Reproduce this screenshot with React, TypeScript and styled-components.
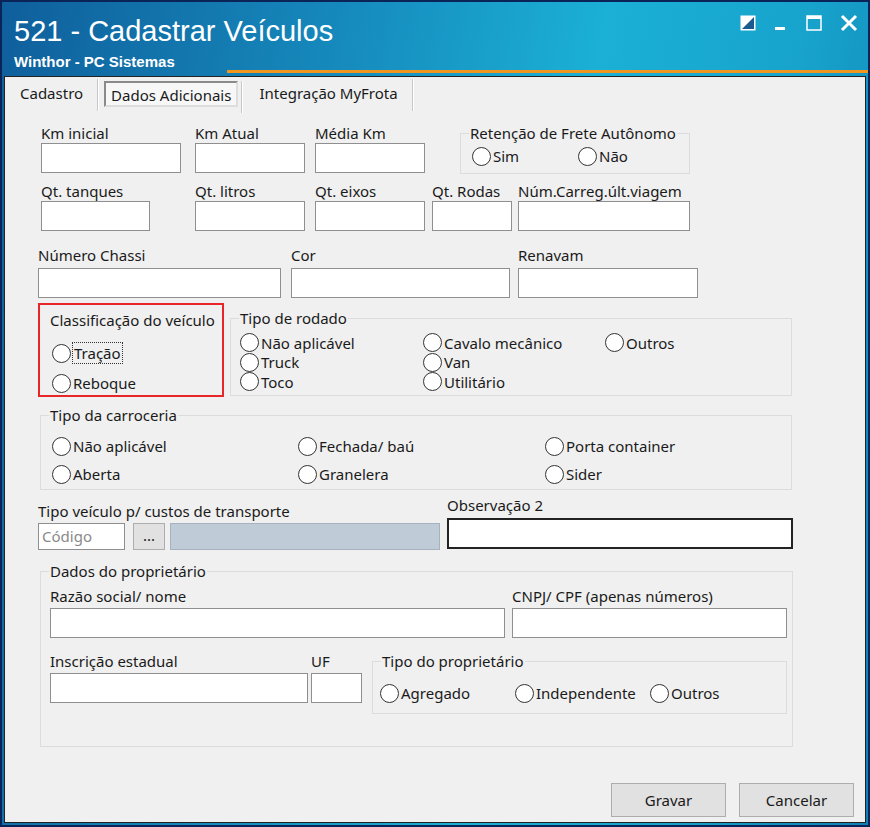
import React from "react";
import styled, { createGlobalStyle } from "styled-components";

const Global = createGlobalStyle`
  html, body { margin: 0; padding: 0; background: #0b2a66; }
  * { box-sizing: border-box; }
`;

const Win = styled.div`
  width: 870px; height: 827px; display: flex; flex-direction: column;
  background: linear-gradient(100deg, #0f5f9c 0%, #168bbd 35%, #1bb0d6 60%, #17a3cc 80%, #1080b5 100%);
  border: 2px solid #0a2458;
  font-family: "Noto Sans", "DejaVu Sans", sans-serif; font-size: 15px; color: #1a1a1a;
`;
const TitleBar = styled.div`
  height: 74px; position: relative; padding: 11px 0 0 12px; color: #fff;
  &::after { content: ""; position: absolute; left: 225px; right: 0; bottom: 3px; height: 3px; background: #f0961e; }
`;
const Title = styled.div`font-family: "Liberation Sans", Arial, sans-serif; font-size: 29px; line-height: 36px;`;
const Sub = styled.div`font-family: "Liberation Sans", Arial, sans-serif; font-weight: bold; font-size: 15px; margin-top: 4px;`;
const Controls = styled.div`
  position: absolute; right: 10px; top: 12px; display: flex; gap: 18px; align-items: center;
`;
const Body = styled.div`
  flex: 1; margin: 0 2px 2px; background: #f0f0f0; border: 1px solid #222; display: flex; flex-direction: column;
`;
const Tabs = styled.div`display: flex; align-items: center; height: 33px; padding-left: 6px;`;
const Tab = styled.div<{ $sel?: boolean }>`
  padding: 0 9px; height: 26px; line-height: 24px; margin-right: 12px; position: relative;
  ${p => p.$sel ? "border: 2px solid #8a8a8a; border-right-color:#ddd; border-bottom-color:#ddd; background:#f7f7f7; padding: 0 5px;" : ""}
  &::after { content: ""; position: absolute; right: -7px; top: -2px; height: 32px; border-left: 1px solid #c8c8c8; border-right: 1px solid #fff; }
`;
const Sheet = styled.div`flex: 1; display: flex; flex-direction: column; padding-left: 0;`;
const Row = styled.div<{ $mt: number }>`display: flex; align-items: flex-start; margin-top: ${p => p.$mt}px;`;
const Field = styled.div<{ $ml: number; $w: number; $up?: number }>`
  display: flex; flex-direction: column; margin-left: ${p => p.$ml}px; width: ${p => p.$w}px;
  margin-top: ${p => -(p.$up ?? 0)}px;
`;
const Label = styled.div<{ $h?: number }>`height: ${p => p.$h ?? 19}px; line-height: 18px; white-space: nowrap;`;
const Input = styled.div<{ $h?: number; $dark?: boolean }>`
  height: ${p => p.$h ?? 30}px; background: #fff;
  border: ${p => p.$dark ? "2px solid #222" : "1px solid #8f8f8f"};
`;
const Group = styled.fieldset<{ $ml: number; $w: number; $h: number; $mt?: number }>`
  margin: ${p => p.$mt ?? 0}px 0 0 ${p => p.$ml}px; width: ${p => p.$w}px; height: ${p => p.$h}px;
  border: 1px solid #dcdcdc; padding: 0; position: relative; min-width: 0;
  & > legend { padding: 0 1px; margin-left: 8px; line-height: 18px; }
`;
const RedBox = styled.div<{ $ml: number }>`
  margin-left: ${p => p.$ml}px; width: 186px; height: 94px; border: 2px solid #e8262a; padding: 6px 0 0 10px;
`;
const Grid = styled.div<{ $cols: string; $pt: number; $pl: number; $rh: number }>`
  display: grid; grid-template-columns: ${p => p.$cols}; grid-auto-rows: ${p => p.$rh}px;
  padding: ${p => p.$pt}px 0 0 ${p => p.$pl}px; align-items: center;
`;
const RadioWrap = styled.div`display: flex; align-items: center; gap: 2px; white-space: nowrap;`;
const Circle = styled.span`
  width: 19px; height: 19px; border-radius: 50%; border: 1.5px solid #333; background: #fff; flex: none;
`;
const Focus = styled.span`outline: 1px dotted #333; padding: 0 1px;`;
const SmallBtn = styled.div`
  width: 32px; height: 27px; margin-left: 8px; background: #e1e1e1; border: 1px solid #adadad; text-align: center; line-height: 22px;
`;
const GrayBox = styled.div`flex: 1; height: 27px; margin-left: 5px; background: #bfcbd6; border: 1px solid #a6b3bf;`;
const Placeholder = styled.div`
  width: 87px; height: 27px; background: #fff; border: 1px solid #8f8f8f; color: #8a8a8a; padding-left: 3px; line-height: 25px;
`;
const Buttons = styled.div`display: flex; justify-content: flex-end; gap: 13px; margin-top: auto; margin-bottom: 5px; padding-right: 11px;`;
const Btn = styled.div`
  width: 115px; height: 34px; background: #e1e1e1; border: 1px solid #adadad; text-align: center; line-height: 32px; font-size: 15px;
`;

const Radio = ({ label, focus }: { label: string; focus?: boolean }) => (
  <RadioWrap><Circle />{focus ? <Focus>{label}</Focus> : <span>{label}</span>}</RadioWrap>
);

export default function App() {
  return (
    <Win>
      <Global />
      <TitleBar>
        <Title>521 - Cadastrar Veículos</Title>
        <Sub>Winthor - PC Sistemas</Sub>
        <Controls>
          <svg width="16" height="16" viewBox="0 0 16 16"><rect x="0.5" y="0.5" width="15" height="15" fill="#fff" /><path d="M2 14 L14 2 L14 14 Z" fill="#1a5a90" /></svg>
          <svg width="14" height="16" viewBox="0 0 14 16"><rect x="1" y="12" width="10" height="3" fill="#fff" /></svg>
          <svg width="16" height="16" viewBox="0 0 16 16"><rect x="1" y="1" width="14" height="14" fill="none" stroke="#fff" strokeWidth="1.5" /><rect x="1" y="1" width="14" height="3" fill="#fff" /></svg>
          <svg width="18" height="18" viewBox="0 0 18 18"><path d="M2 2 L16 16 M16 2 L2 16" stroke="#fff" strokeWidth="3" /></svg>
        </Controls>
      </TitleBar>
      <Body>
        <Tabs>
          <Tab>Cadastro</Tab>
          <Tab $sel>Dados Adicionais</Tab>
          <Tab>Integração MyFrota</Tab>
        </Tabs>
        <Sheet>
          <Row $mt={14}>
            <Field $ml={36} $w={140}><Label>Km inicial</Label><Input /></Field>
            <Field $ml={14} $w={110}><Label>Km Atual</Label><Input /></Field>
            <Field $ml={10} $w={110}><Label>Média Km</Label><Input /></Field>
            <Group $ml={35} $w={230} $h={50}>
              <legend>Retenção de Frete Autônomo</legend>
              <Grid $cols="106px 1fr" $pt={2} $pl={11} $rh={24}><Radio label="Sim" /><Radio label="Não" /></Grid>
            </Group>
          </Row>
          <Row $mt={8}>
            <Field $ml={36} $w={109}><Label>Qt. tanques</Label><Input /></Field>
            <Field $ml={45} $w={110}><Label>Qt. litros</Label><Input /></Field>
            <Field $ml={10} $w={110}><Label>Qt. eixos</Label><Input /></Field>
            <Field $ml={7} $w={80}><Label>Qt. Rodas</Label><Input /></Field>
            <Field $ml={6} $w={172}><Label>Núm.Carreg.últ.viagem</Label><Input /></Field>
          </Row>
          <Row $mt={15}>
            <Field $ml={33} $w={243}><Label $h={22}>Número Chassi</Label><Input /></Field>
            <Field $ml={10} $w={219}><Label $h={22}>Cor</Label><Input /></Field>
            <Field $ml={8} $w={180}><Label $h={22}>Renavam</Label><Input /></Field>
          </Row>
          <Row $mt={5}>
            <RedBox $ml={33}>
              <Label>Classificação do veículo</Label>
              <Grid $cols="1fr" $pt={8} $pl={2} $rh={30}><Radio label="Tração" focus /><Radio label="Reboque" /></Grid>
            </RedBox>
            <Group $ml={6} $w={562} $h={87} $mt={6}>
              <legend>Tipo de rodado</legend>
              <Grid $cols="183px 182px 1fr" $pt={6} $pl={9} $rh={19.5}>
                <Radio label="Não aplicável" /><Radio label="Cavalo mecânico" /><Radio label="Outros" />
                <Radio label="Truck" /><Radio label="Van" /><span />
                <Radio label="Toco" /><Radio label="Utilitário" />
              </Grid>
            </Group>
          </Row>
          <Row $mt={9}>
            <Group $ml={35} $w={752} $h={84}>
              <legend>Tipo da carroceria</legend>
              <Grid $cols="246px 247px 1fr" $pt={8} $pl={11} $rh={28}>
                <Radio label="Não aplicável" /><Radio label="Fechada/ baú" /><Radio label="Porta container" />
                <Radio label="Aberta" /><Radio label="Granelera" /><Radio label="Sider" />
              </Grid>
            </Group>
          </Row>
          <Row $mt={12}>
            <Field $ml={33} $w={402}>
              <Label $h={21}>Tipo veículo p/ custos de transporte</Label>
              <Row $mt={0}><Placeholder>Código</Placeholder><SmallBtn>...</SmallBtn><GrayBox /></Row>
            </Field>
            <Field $ml={7} $w={346} $up={6}><Label $h={22}>Observação 2</Label><Input $h={31} $dark /></Field>
          </Row>
          <Row $mt={12}>
            <Group $ml={35} $w={753} $h={185}>
              <legend>Dados do proprietário</legend>
              <Row $mt={7}>
                <Field $ml={9} $w={455}><Label $h={21}>Razão social/ nome</Label><Input /></Field>
                <Field $ml={7} $w={275}><Label $h={21}>CNPJ/ CPF (apenas números)</Label><Input /></Field>
              </Row>
              <Row $mt={14}>
                <Field $ml={9} $w={258}><Label $h={21}>Inscrição estadual</Label><Input /></Field>
                <Field $ml={3} $w={51}><Label $h={21}>UF</Label><Input /></Field>
                <Group $ml={10} $w={415} $h={62}>
                  <legend>Tipo do proprietário</legend>
                  <Grid $cols="135px 135px 1fr" $pt={12} $pl={7} $rh={22}>
                    <Radio label="Agregado" /><Radio label="Independente" /><Radio label="Outros" />
                  </Grid>
                </Group>
              </Row>
            </Group>
          </Row>
          <Buttons><Btn>Gravar</Btn><Btn>Cancelar</Btn></Buttons>
        </Sheet>
      </Body>
    </Win>
  );
}
